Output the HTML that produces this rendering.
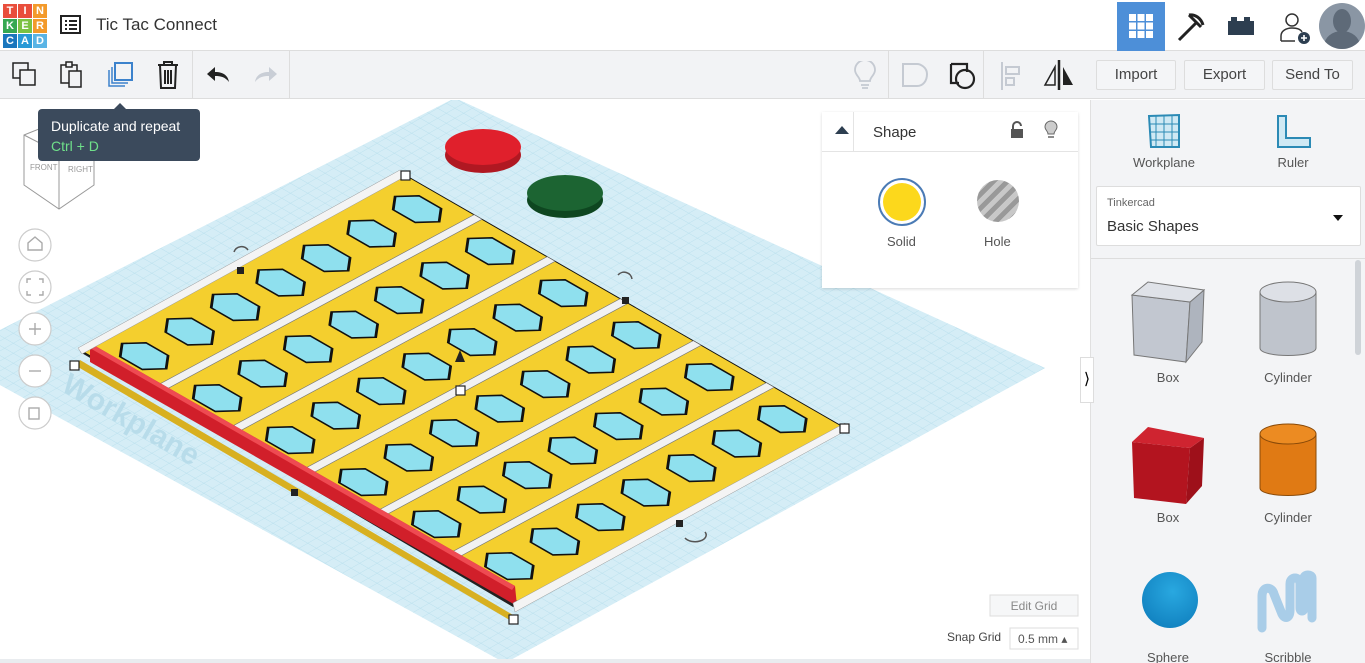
<!DOCTYPE html>
<html><head><meta charset="utf-8"><style>
*{box-sizing:border-box;margin:0;padding:0}
body{width:1365px;height:663px;overflow:hidden;background:#fff;font-family:"Liberation Sans",sans-serif;position:relative}
.top{position:absolute;left:0;top:0;width:1365px;height:51px;background:#fff;border-bottom:1px solid #ddd}
.tb{position:absolute;left:0;top:51px;width:1365px;height:48px;background:#f2f3f5;border-bottom:1px solid #ddd}
.btn{position:absolute;top:60px;height:30px;border:1px solid #ddd;background:#f4f5f7;color:#444;font-size:15px;text-align:center;line-height:28px;border-radius:2px}
.side{position:absolute;left:1090px;top:100px;width:275px;height:563px;background:#f3f4f6;border-left:1px solid #e0e0e0;overflow:hidden}
.lbl{position:absolute;font-size:13px;color:#555;text-align:center;width:100px}
</style></head><body>
<div class="top">
 <div style="position:absolute;left:3px;top:4px;width:42px;height:44px;display:grid;grid-template-columns:repeat(3,14px);grid-template-rows:repeat(3,14px);gap:1px;font-size:11px;font-weight:bold;color:#fff;text-align:center;line-height:14px">
  <div style="background:#e94e3c">T</div><div style="background:#e94e3c">I</div><div style="background:#f39a2b">N</div>
  <div style="background:#36a852">K</div><div style="background:#7cc242">E</div><div style="background:#f39a2b">R</div>
  <div style="background:#1a76bd">C</div><div style="background:#2a9ad6">A</div><div style="background:#5ab4e5">D</div></div>
 <svg style="position:absolute;left:60px;top:15px" width="22" height="20"><rect x="1" y="1" width="19" height="17" fill="none" stroke="#222" stroke-width="2"/><path d="M5 6h2M9 6h8M5 10h2M9 10h8M5 14h2M9 14h8" stroke="#222" stroke-width="2"/></svg>
 <div style="position:absolute;left:96px;top:15px;font-size:17px;color:#333">Tic Tac Connect</div>
 <div style="position:absolute;left:1117px;top:2px;width:48px;height:49px;background:#4d8fd8"></div>
 <svg style="position:absolute;left:1129px;top:14px" width="24" height="24"><g fill="#fff"><rect x="0" y="0" width="7" height="7"/><rect x="8.5" y="0" width="7" height="7"/><rect x="17" y="0" width="7" height="7"/><rect x="0" y="8.5" width="7" height="7"/><rect x="8.5" y="8.5" width="7" height="7"/><rect x="17" y="8.5" width="7" height="7"/><rect x="0" y="17" width="7" height="7"/><rect x="8.5" y="17" width="7" height="7"/><rect x="17" y="17" width="7" height="7"/></g></svg>
 <svg style="position:absolute;left:1175px;top:12px" width="32" height="30"><path d="M4 28L22 10M14 3c6-1 12 3 14 10M14 3l12 12" stroke="#222" stroke-width="3" fill="none"/></svg>
 <svg style="position:absolute;left:1226px;top:16px" width="30" height="20"><rect x="2" y="5" width="26" height="14" fill="#2d3e50"/><rect x="5" y="1" width="6" height="5" fill="#2d3e50"/><rect x="18" y="1" width="6" height="5" fill="#2d3e50"/></svg>
 <svg style="position:absolute;left:1278px;top:11px" width="36" height="36"><circle cx="14" cy="9" r="6" fill="none" stroke="#333" stroke-width="1.5"/><path d="M3 30v-5c0-5 5-8 11-8s9 2 10 4M3 30h14" fill="none" stroke="#333" stroke-width="1.5"/><circle cx="26" cy="27" r="6" fill="#2d3e50"/><path d="M26 24v6M23 27h6" stroke="#fff" stroke-width="1.6"/></svg>
 <div style="position:absolute;left:1319px;top:3px;width:46px;height:46px;border-radius:50%;background:#8a96a4;overflow:hidden"><div style="position:absolute;left:14px;top:6px;width:18px;height:24px;border-radius:50%;background:#5e6a78"></div><div style="position:absolute;left:5px;top:28px;width:36px;height:30px;border-radius:50%;background:#5e6a78"></div></div>
</div>
<div class="tb">
 <svg style="position:absolute;left:12px;top:11px" width="26" height="26"><rect x="1" y="1" width="15" height="15" fill="none" stroke="#222" stroke-width="1.5"/><rect x="8" y="8" width="15" height="15" fill="#f2f3f5" stroke="#222" stroke-width="1.5"/></svg>
 <svg style="position:absolute;left:59px;top:10px" width="26" height="28"><path d="M2 4h16v18H2z" fill="none" stroke="#222" stroke-width="1.5"/><rect x="7" y="1" width="6" height="5" fill="#f2f3f5" stroke="#222" stroke-width="1.5"/><rect x="10" y="10" width="12" height="16" fill="#f2f3f5" stroke="#222" stroke-width="1.5"/></svg>
 <svg style="position:absolute;left:106px;top:10px" width="28" height="28"><rect x="9" y="2" width="17" height="17" fill="none" stroke="#3c82cc" stroke-width="2"/><path d="M6 6v16h16M3 9v16h16" fill="none" stroke="#3c82cc" stroke-width="1.5"/></svg>
 <svg style="position:absolute;left:156px;top:9px" width="24" height="30"><path d="M2 5h20M8 5V2h8v3M4 5l1 23h14l1-23M9 10v14M12 10v14M15 10v14" fill="none" stroke="#222" stroke-width="2"/></svg>
 <div style="position:absolute;left:192px;top:0;width:1px;height:48px;background:#ddd"></div>
 <svg style="position:absolute;left:205px;top:15px" width="26" height="18"><path d="M10 1L2 8l8 7V10c6 0 10 1 14 6-1-6-5-10-14-10z" fill="#222"/></svg>
 <svg style="position:absolute;left:253px;top:15px" width="26" height="18"><path d="M16 1l8 7-8 7V10C10 10 6 11 2 16c1-6 5-10 14-10z" fill="#c9ced6"/></svg>
 <div style="position:absolute;left:289px;top:0;width:1px;height:48px;background:#ddd"></div>
 <svg style="position:absolute;left:852px;top:10px" width="26" height="30"><path d="M8 20c0-4-5-6-5-11a10 10 0 0 1 20 0c0 5-5 7-5 11z M9 24h8M10 27h6" fill="none" stroke="#c5cad2" stroke-width="1.8"/></svg>
 <div style="position:absolute;left:888px;top:0;width:1px;height:48px;background:#ddd"></div>
 <svg style="position:absolute;left:900px;top:10px" width="30" height="30"><path d="M3 3h14c3 0 10 3 10 10s-4 12-10 12H3z" fill="none" stroke="#c5cad2" stroke-width="2"/></svg>
 <svg style="position:absolute;left:948px;top:10px" width="30" height="30"><path d="M3 3h16v8M3 3v19h8" fill="none" stroke="#222" stroke-width="2.2"/><circle cx="17" cy="18" r="9" fill="none" stroke="#222" stroke-width="2.2"/></svg>
 <div style="position:absolute;left:983px;top:0;width:1px;height:48px;background:#ddd"></div>
 <svg style="position:absolute;left:1000px;top:10px" width="24" height="30"><path d="M2 1v28" stroke="#c5cad2" stroke-width="2"/><rect x="6" y="6" width="13" height="7" fill="none" stroke="#c5cad2" stroke-width="2"/><rect x="6" y="17" width="8" height="7" fill="none" stroke="#c5cad2" stroke-width="2"/></svg>
 <svg style="position:absolute;left:1043px;top:8px" width="32" height="32"><path d="M16 1v30" stroke="#222" stroke-width="2.5"/><path d="M12 8L2 26h10z" fill="none" stroke="#222" stroke-width="1.5"/><path d="M20 8l10 18H20z" fill="#222"/></svg>
</div>
<div class="btn" style="left:1096px;width:80px">Import</div>
<div class="btn" style="left:1184px;width:81px">Export</div>
<div class="btn" style="left:1272px;width:81px">Send To</div>

<svg style="position:absolute;left:0;top:100px" width="1090" height="563" viewBox="0 100 1090 563">
 <defs>
  <pattern id="g" width="10" height="10" patternUnits="userSpaceOnUse"><rect width="10" height="10" fill="#d6eef6"/><path d="M0 0H10M0 0V10" stroke="#9ed3e6" stroke-width="0.7"/></pattern>
  <clipPath id="wp"><polygon points="455,98 1045,368 505,663 0,385 0,330"/></clipPath>
 </defs>
 <rect x="0" y="100" width="1090" height="563" fill="#fff"/>
 <polygon points="455,98 1045,368 505,663 0,385 0,330" fill="#d3ecf5"/>
 <g clip-path="url(#wp)"><g transform="matrix(0.866,0.5,-0.866,0.5,455,98)" opacity="0.7"><rect x="-200" y="-200" width="1000" height="1000" fill="url(#g)"/></g></g>
 <text x="60" y="390" transform="rotate(30 60 390)" font-size="30" font-weight="bold" fill="#b8dcea">Workplane</text>
 <polygon points="80,352 405,177 845,430 513,607" fill="#222"/>
 <polygon points="80,360 513,615 513,622 78,367" fill="#d8b020"/>
 <g id="board" transform="matrix(4.4,2.53,-3.25,1.75,405,175)">
  <rect x="0" y="0" width="100" height="100" fill="#f4cf2e" stroke="#111" stroke-width="0.3"/>
 </g>
 <polygon points="90,343 515,586 517,606 90,362" fill="#d11f2a"/>
 <polygon points="90,343 515,586 512,590 88,347" fill="#ee4a52"/>
 <polygon points="78,348 400,170 406,176 82,354" fill="#f4f4f4" stroke="#999" stroke-width="0.5"/>
 <polygon points="513,603 845,423 847,430 515,612" fill="#f4f4f4" stroke="#999" stroke-width="0.5"/>
 <ellipse cx="483" cy="155" rx="38" ry="18" fill="#b01822"/><ellipse cx="483" cy="147" rx="38" ry="18" fill="#e0202c"/>
 <ellipse cx="565" cy="200" rx="38" ry="18" fill="#0e4620"/><ellipse cx="565" cy="193" rx="38" ry="18" fill="#1c6432"/>
 <g fill="#fff" stroke="#222" stroke-width="1.2"><rect x="70" y="361" width="9" height="9"/><rect x="401" y="171" width="9" height="9"/><rect x="840" y="424" width="9" height="9"/><rect x="509" y="615" width="9" height="9"/><rect x="456" y="386" width="9" height="9"/></g>
 <g fill="#222"><rect x="237" y="267" width="7" height="7"/><rect x="622" y="297" width="7" height="7"/><rect x="291" y="489" width="7" height="7"/><rect x="676" y="520" width="7" height="7"/></g>
 <path d="M455 362l5-12 5 12z" fill="#222"/>
 <g fill="none" stroke="#555" stroke-width="1.5"><path d="M234 252a8 8 0 0 1 14-2"/><path d="M618 275a8 8 0 0 1 14 4"/><path d="M685 538a10 6 0 0 0 20-6"/></g>
 <g fill="none" stroke="#999" stroke-width="1"><path d="M24 135l35-14 35 14v50l-35 24-35-24z"/><path d="M24 135l35 18 35-18M59 153v56"/></g>
 <text x="30" y="170" font-size="8" fill="#999">FRONT</text><text x="68" y="172" font-size="8" fill="#999">RIGHT</text>
 <g fill="#fff" stroke="#ccc" stroke-width="1.2"><circle cx="35" cy="245" r="16"/><circle cx="35" cy="287" r="16"/><circle cx="35" cy="329" r="16"/><circle cx="35" cy="371" r="16"/><circle cx="35" cy="413" r="16"/></g>
 <g stroke="#aaa" fill="none" stroke-width="1.4"><path d="M28 250v-7l7-6 7 6v7z"/><path d="M27 283v-4h4M39 279h4v4M43 291v4h-4M31 295h-4v-4"/><path d="M29 329h12M35 323v12"/><path d="M29 371h12"/><rect x="29" y="408" width="10" height="11"/></g>
 <rect x="990" y="595" width="88" height="21" fill="#f6f7f8" stroke="#ddd"/>
 <text x="1034" y="610" font-size="12" fill="#888" text-anchor="middle">Edit Grid</text>
 <text x="947" y="641" font-size="12" fill="#444">Snap Grid</text>
 <rect x="1010" y="628" width="68" height="21" fill="#fff" stroke="#ddd"/>
 <text x="1018" y="643" font-size="12" fill="#555">0.5 mm ▴</text>
 <rect x="0" y="659" width="1090" height="4" fill="#e9ecef"/>
</svg>

<div style="position:absolute;left:38px;top:109px;width:162px;height:52px;background:#3b4a5c;border-radius:4px;color:#fff;font-size:14px;padding:7px 13px;line-height:20px">Duplicate and repeat<br><span style="color:#6fe08a">Ctrl + D</span></div>
<div style="position:absolute;left:114px;top:103px;width:0;height:0;border-left:6px solid transparent;border-right:6px solid transparent;border-bottom:6px solid #3b4a5c"></div>

<div style="position:absolute;left:822px;top:112px;width:256px;height:176px;background:#fff;box-shadow:0 1px 3px rgba(0,0,0,.15)">
 <div style="height:40px;border-bottom:1px solid #e4e4e4;position:relative">
  <div style="position:absolute;left:13px;top:14px;width:0;height:0;border-left:7px solid transparent;border-right:7px solid transparent;border-bottom:8px solid #2d3e50"></div>
  <div style="position:absolute;left:31px;top:0;width:1px;height:40px;background:#e4e4e4"></div>
  <div style="position:absolute;left:51px;top:12px;font-size:15px;color:#333">Shape</div>
  <svg style="position:absolute;left:187px;top:8px" width="16" height="20"><path d="M4 9V6a4 4 0 0 1 8 0" fill="none" stroke="#555" stroke-width="2"/><rect x="2" y="9" width="12" height="9" fill="#555"/></svg>
  <svg style="position:absolute;left:221px;top:8px" width="16" height="22"><path d="M5 14c0-3-3-4-3-7a6 6 0 0 1 12 0c0 3-3 4-3 7z" fill="#ccc" stroke="#666"/><path d="M5 17h6" stroke="#666" stroke-width="1.5"/></svg>
 </div>
 <div style="position:absolute;left:56px;top:66px;width:48px;height:48px;border-radius:50%;border:2px solid #4b7bb5;padding:3px"><div style="width:100%;height:100%;border-radius:50%;background:#fcd81c"></div></div>
 <div style="position:absolute;left:155px;top:68px;width:42px;height:42px;border-radius:50%;background:repeating-linear-gradient(135deg,#999 0 5px,#c8c8c8 5px 10px)"></div>
 <div style="position:absolute;left:65px;top:122px;font-size:13px;color:#555">Solid</div>
 <div style="position:absolute;left:162px;top:122px;font-size:13px;color:#555">Hole</div>
</div>

<div class="side">
 <svg style="position:absolute;left:55px;top:13px" width="36" height="36"><path d="M3 3l30-1v32H5z" fill="#cfe9f4" stroke="#2b8ab5" stroke-width="2"/><path d="M10 3v31M18 2v32M26 2v32M4 11h29M4 19h29M5 27h28" stroke="#2b8ab5" stroke-width="1"/></svg>
 <div class="lbl" style="left:23px;top:55px">Workplane</div>
 <svg style="position:absolute;left:185px;top:14px" width="36" height="36"><path d="M2 2h8v22h24v9H2z" fill="#cfe9f4" stroke="#2b8ab5" stroke-width="2"/></svg>
 <div class="lbl" style="left:152px;top:55px">Ruler</div>
 <div style="position:absolute;left:5px;top:86px;width:265px;height:60px;background:#fff;border:1px solid #ddd;border-radius:2px">
  <div style="position:absolute;left:10px;top:10px;font-size:11px;color:#666">Tinkercad</div>
  <div style="position:absolute;left:10px;top:31px;font-size:15px;color:#333">Basic Shapes</div>
  <div style="position:absolute;left:236px;top:28px;border-left:5px solid transparent;border-right:5px solid transparent;border-top:6px solid #111"></div>
 </div>
 <div style="position:absolute;left:0;top:158px;width:275px;height:1px;background:#ddd"></div>
 <div style="position:absolute;left:264px;top:160px;width:6px;height:95px;background:#cfd3d8;border-radius:3px"></div>
 <svg style="position:absolute;left:37px;top:180px" width="80" height="85"><polygon points="4,15 20,2 76,10 72,30 4,20" fill="#d6d9e0"/><polygon points="4,15 62,22 58,82 6,75" fill="#c2c7d0" stroke="#777"/><polygon points="62,22 76,10 74,62 58,82" fill="#aeb4be" stroke="#777"/><polygon points="4,15 20,2 76,10 62,22" fill="#dfe2e8" stroke="#777"/></svg>
 <div class="lbl" style="left:27px;top:270px">Box</div>
 <svg style="position:absolute;left:165px;top:180px" width="65" height="80"><path d="M4 12v56c0 10 56 10 56 0V12z" fill="#bfc4cc" stroke="#777"/><ellipse cx="32" cy="12" rx="28" ry="10" fill="#dde0e6" stroke="#777"/></svg>
 <div class="lbl" style="left:147px;top:270px">Cylinder</div>
 <svg style="position:absolute;left:37px;top:320px" width="80" height="85"><polygon points="4,22 62,28 58,84 6,78" fill="#b3141f"/><polygon points="62,28 76,18 74,66 58,84" fill="#9e101a"/><polygon points="4,22 20,7 76,18 62,28" fill="#cf2430"/></svg>
 <div class="lbl" style="left:27px;top:410px">Box</div>
 <svg style="position:absolute;left:165px;top:320px" width="65" height="80"><path d="M4 14v54c0 10 56 10 56 0V14z" fill="#e07a14" stroke="#8a4a08"/><ellipse cx="32" cy="14" rx="28" ry="10" fill="#ec8b22" stroke="#8a4a08"/></svg>
 <div class="lbl" style="left:147px;top:410px">Cylinder</div>
 <div style="position:absolute;left:51px;top:472px;width:56px;height:56px;border-radius:50%;background:radial-gradient(circle at 55% 35%,#29a8e0,#0b78b8)"></div>
 <div class="lbl" style="left:27px;top:550px">Sphere</div>
 <svg style="position:absolute;left:165px;top:470px" width="65" height="70"><path d="M6 58V26c0-10 10-10 12-2l8 20c3 6 8 4 8-4V14c0-8 10-8 10 0v24c0 4 4 4 4 0V8c0-4 8-4 8 0v40" fill="none" stroke="#a9cde8" stroke-width="9" stroke-linecap="round"/></svg>
 <div class="lbl" style="left:147px;top:550px">Scribble</div>
</div>
<div style="position:absolute;left:1080px;top:357px;width:14px;height:46px;background:#fff;border:1px solid #ddd;font-size:16px;line-height:44px;text-align:center">⟩</div>

<script>
var b=document.getElementById('board'),h='';
for(var r=1;r<6;r++){var x=r*16.6;h+='<rect x="'+(x-0.9)+'" y="0" width="1.8" height="100" fill="#f2f2f2" stroke="#777" stroke-width="0.15"/>';}
for(var c=0;c<6;c++){for(var k=0;k<7;k++){var cx=8.3+c*16.6,cy=7.5+k*14;var p=[];for(var i=0;i<6;i++){var a=Math.PI/3*i;p.push((cx+5*Math.cos(a)).toFixed(2)+','+(cy+4.6*Math.sin(a)).toFixed(2));}
h+='<polygon points="'+p.join(' ')+'" fill="#8fe0ee" stroke="#111" stroke-width="0.5"/>';}}
b.insertAdjacentHTML('beforeend',h);
</script>
</body></html>
